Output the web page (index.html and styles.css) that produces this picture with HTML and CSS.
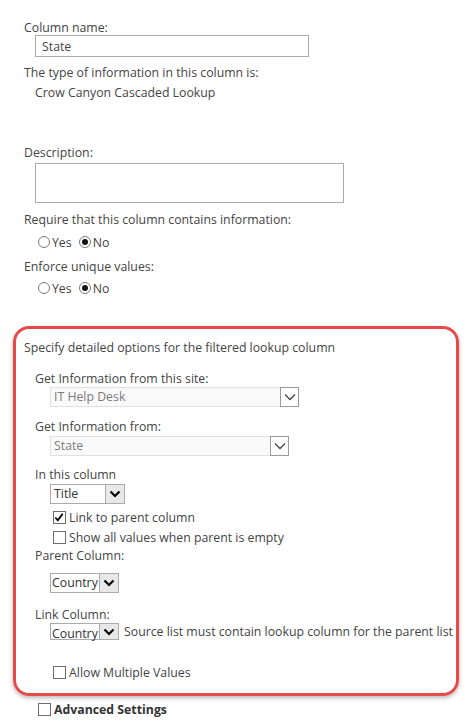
FILE: index.html
```html
<!DOCTYPE html>
<html>
<head>
<meta charset="utf-8">
<link rel="stylesheet" href="styles.css">
</head>
<body>
<div class="page">
  <div class="lbl l-colname">Column name:</div>
  <div class="textbox">State</div>
  <div class="lbl l-type">The type of information in this column is:</div>
  <div class="lbl indent">Crow Canyon Cascaded Lookup</div>
  <div class="lbl l-desc">Description:</div>
  <div class="textarea"></div>
  <div class="lbl l-req">Require that this column contains information:</div>
  <div class="radios r1">
    <span class="radio"></span><span class="rtext">Yes</span>
    <span class="radio on"></span><span class="rtext">No</span>
  </div>
  <div class="lbl l-enf">Enforce unique values:</div>
  <div class="radios r2">
    <span class="radio"></span><span class="rtext">Yes</span>
    <span class="radio on"></span><span class="rtext">No</span>
  </div>

  <div class="box">
    <div class="lbl b-head">Specify detailed options for the filtered lookup column</div>
    <div class="sub b-site">Get Information from this site:</div>
    <div class="sel dis w-site"><span class="val">IT Help Desk</span><span class="arr"><svg width="12" height="8" viewBox="0 0 12 8"><path d="M1 1.5 L6 6.5 L11 1.5" fill="none" stroke="#444" stroke-width="1.3"/></svg></span></div>
    <div class="sub b-from">Get Information from:</div>
    <div class="sel dis w-from"><span class="val">State</span><span class="arr"><svg width="12" height="8" viewBox="0 0 12 8"><path d="M1 1.5 L6 6.5 L11 1.5" fill="none" stroke="#444" stroke-width="1.3"/></svg></span></div>
    <div class="sub b-col">In this column</div>
    <div class="sel act w-title"><span class="val">Title</span><span class="arr"><svg width="12" height="8" viewBox="0 0 12 8"><path d="M1.5 1.5 L6 6 L10.5 1.5" fill="none" stroke="#000" stroke-width="2.2"/></svg></span></div>
    <div class="chk c-link"><span class="cb on"><svg width="13" height="13" viewBox="0 0 13 13"><path d="M2.5 6.5 L5.2 9.5 L10.5 2.5" fill="none" stroke="#000" stroke-width="2"/></svg></span><span>Link to parent column</span></div>
    <div class="chk c-show"><span class="cb"></span><span>Show all values when parent is empty</span></div>
    <div class="sub b-parent">Parent Column:</div>
    <div class="sel act w-country c-parent"><span class="val">Country</span><span class="arr"><svg width="12" height="8" viewBox="0 0 12 8"><path d="M1.5 1.5 L6 6 L10.5 1.5" fill="none" stroke="#000" stroke-width="2.2"/></svg></span></div>
    <div class="sub b-link">Link Column:</div>
    <div class="linkrow">
      <div class="sel act w-country short"><span class="val">Country</span><span class="arr"><svg width="12" height="8" viewBox="0 0 12 8"><path d="M1.5 1.5 L6 6 L10.5 1.5" fill="none" stroke="#000" stroke-width="2.2"/></svg></span></div>
      <span class="note">Source list must contain lookup column for the parent list</span>
    </div>
    <div class="chk c-multi"><span class="cb"></span><span>Allow Multiple Values</span></div>
  </div>

  <div class="adv"><span class="cb"></span><span class="advtext">Advanced Settings</span></div>
</div>
</body>
</html>
```
FILE: styles.css
```css
* { box-sizing: border-box; }
html, body { margin: 0; padding: 0; background: #fff; }
body {
  font-family: "Segoe UI", "Open Sans", "Noto Sans", sans-serif;
  font-size: 12.3px;
  color: #444;
  width: 466px;
  height: 728px;
  overflow: hidden;
}
.page { padding: 0 0 0 24px; }
.lbl { line-height: 20px; white-space: nowrap; }
.indent { padding-left: 11px; }
.l-colname { line-height: 14px; padding-top: 21px; }
.textbox {
  margin-left: 11px;
  width: 274px;
  height: 22px;
  border: 1px solid #ababab;
  padding-left: 6px;
  line-height: 21px;
  color: #444;
}
.l-type { margin-top: 6px; }
.l-desc { margin-top: 40px; }
.textarea {
  margin-left: 11px;
  width: 309px;
  height: 40px;
  border: 1px solid #ababab;
}
.l-req { margin-top: 7px; }
.radios {
  display: flex;
  align-items: center;
  height: 20px;
  padding-left: 14px;
}
.r1 { margin-top: 2px; }
.l-enf { margin-top: 5px; }
.r2 { margin-top: 1px; }
.radio {
  width: 12px; height: 12px;
  border: 1px solid #7a7a7a;
  border-radius: 50%;
  display: inline-flex;
  align-items: center;
  justify-content: center;
  margin-right: 2px;
}
.radio.on::after {
  content: "";
  width: 6px; height: 6px;
  border-radius: 50%;
  background: #111;
}
.rtext { margin-right: 7px; }

.box {
  margin: 28px 0 0 -11px;
  width: 446px;
  border: 3px solid #e84a4b;
  border-radius: 16px;
  padding: 9px 0 11px 8px;
  box-shadow: 0 2px 4px rgba(0,0,0,0.28);
}
.sub { line-height: 16px; padding-left: 11px; white-space: nowrap; }
.b-site { margin-top: 13px; }
.b-from { margin-top: 12px; }
.b-col { margin-top: 11px; }
.b-parent { line-height: 18px; }
.b-link { margin-top: 14px; }

.sel {
  margin-left: 26px;
  display: flex;
  height: 20px;
  border: 1px solid #ababab;
}
.sel .val { flex: 1; padding-left: 3px; line-height: 18px; overflow: hidden; white-space: nowrap; }
.sel .arr {
  width: 19px;
  flex: none;
  display: flex;
  align-items: center;
  justify-content: center;
  border-left: 1px solid #ababab;
}
.sel.dis { border-color: #e1e1e1; background: #fafafa; color: #7a7a7a; }
.sel.dis .arr { border: 1px solid #9a9a9a; background: #fff; margin: -1px -1px -1px 0; width: 19px; }
.sel.act { color: #333; }
.sel.act .arr { background: #e8e8e8; border-left-color: #ababab; }
.w-site { width: 249px; margin-top: 0; }
.w-from { width: 239px; margin-top: 1px; }
.w-title { width: 75px; margin-top: 1px; }
.w-country { width: 69px; }
.w-country .val { padding-left: 1px; overflow: visible; }
.c-parent { margin-top: 8px; }

.chk {
  display: flex;
  align-items: center;
  height: 20px;
  padding-left: 29px;
  white-space: nowrap;
}
.c-link { margin-top: 3px; }
.cb {
  width: 13px; height: 13px;
  border: 1px solid #6e6e6e;
  background: #fff;
  margin-right: 3px;
  display: inline-flex;
  flex: none;
}
.cb svg { display: block; margin: -1px 0 0 -1px; }

.linkrow { display: flex; align-items: center; height: 17px; white-space: nowrap; }
.linkrow .sel { height: 17px; }
.linkrow .sel .val { line-height: 17px; padding-top: 1px; }
.note { margin-left: 5px; color: #444; }
.c-multi { margin-top: 22px; }

.adv {
  display: flex;
  align-items: center;
  height: 20px;
  margin-top: 3px;
  padding-left: 14px;
}
.advtext { font-weight: bold; color: #333; }
```
